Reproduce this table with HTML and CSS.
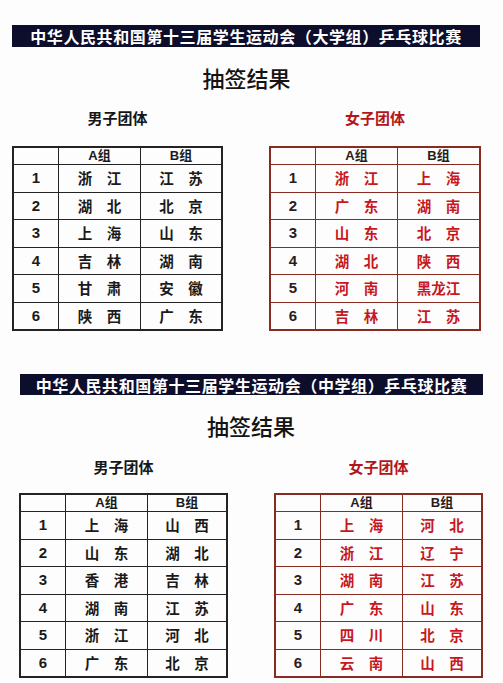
FILE: index.html
```html
<!DOCTYPE html>
<html lang="zh-CN">
<head>
<meta charset="utf-8">
<title>抽签结果</title>
<link rel="stylesheet" href="styles.css">
</head>
<body>
<div class="page">
  <section class="block block--univ">
    <div class="banner"><span class="banner-text">中华人民共和国第十三届学生运动会（大学组）乒乓球比赛</span></div>
    <h1 class="title">抽签结果</h1>
    <div class="draws">
      <div class="draw draw--men">
        <h2 class="draw-name">男子团体</h2>
        <table class="grid">
          <colgroup><col class="c-no"><col class="c-a"><col class="c-b"></colgroup>
          <tr class="head"><td></td><td>A组</td><td>B组</td></tr>
          <tr><td class="no">1</td><td>浙　江</td><td>江　苏</td></tr>
          <tr><td class="no">2</td><td>湖　北</td><td>北　京</td></tr>
          <tr><td class="no">3</td><td>上　海</td><td>山　东</td></tr>
          <tr><td class="no">4</td><td>吉　林</td><td>湖　南</td></tr>
          <tr><td class="no">5</td><td>甘　肃</td><td>安　徽</td></tr>
          <tr><td class="no">6</td><td>陕　西</td><td>广　东</td></tr>
        </table>
      </div>
      <div class="draw draw--women">
        <h2 class="draw-name">女子团体</h2>
        <table class="grid">
          <colgroup><col class="c-no"><col class="c-a"><col class="c-b"></colgroup>
          <tr class="head"><td></td><td>A组</td><td>B组</td></tr>
          <tr><td class="no">1</td><td>浙　江</td><td>上　海</td></tr>
          <tr><td class="no">2</td><td>广　东</td><td>湖　南</td></tr>
          <tr><td class="no">3</td><td>山　东</td><td>北　京</td></tr>
          <tr><td class="no">4</td><td>湖　北</td><td>陕　西</td></tr>
          <tr><td class="no">5</td><td>河　南</td><td>黑龙江</td></tr>
          <tr><td class="no">6</td><td>吉　林</td><td>江　苏</td></tr>
        </table>
      </div>
    </div>
  </section>

  <section class="block block--school">
    <div class="banner"><span class="banner-text">中华人民共和国第十三届学生运动会（中学组）乒乓球比赛</span></div>
    <h1 class="title">抽签结果</h1>
    <div class="draws">
      <div class="draw draw--men">
        <h2 class="draw-name">男子团体</h2>
        <table class="grid">
          <colgroup><col class="c-no"><col class="c-a"><col class="c-b"></colgroup>
          <tr class="head"><td></td><td>A组</td><td>B组</td></tr>
          <tr><td class="no">1</td><td>上　海</td><td>山　西</td></tr>
          <tr><td class="no">2</td><td>山　东</td><td>湖　北</td></tr>
          <tr><td class="no">3</td><td>香　港</td><td>吉　林</td></tr>
          <tr><td class="no">4</td><td>湖　南</td><td>江　苏</td></tr>
          <tr><td class="no">5</td><td>浙　江</td><td>河　北</td></tr>
          <tr><td class="no">6</td><td>广　东</td><td>北　京</td></tr>
        </table>
      </div>
      <div class="draw draw--women">
        <h2 class="draw-name">女子团体</h2>
        <table class="grid">
          <colgroup><col class="c-no"><col class="c-a"><col class="c-b"></colgroup>
          <tr class="head"><td></td><td>A组</td><td>B组</td></tr>
          <tr><td class="no">1</td><td>上　海</td><td>河　北</td></tr>
          <tr><td class="no">2</td><td>浙　江</td><td>辽　宁</td></tr>
          <tr><td class="no">3</td><td>湖　南</td><td>江　苏</td></tr>
          <tr><td class="no">4</td><td>广　东</td><td>山　东</td></tr>
          <tr><td class="no">5</td><td>四　川</td><td>北　京</td></tr>
          <tr><td class="no">6</td><td>云　南</td><td>山　西</td></tr>
        </table>
      </div>
    </div>
  </section>
</div>
</body>
</html>
```

FILE: styles.css
```css
* { box-sizing: border-box; }

html, body {
  margin: 0;
  padding: 0;
  background: #fdfdfd;
}

body {
  font-family: "Noto Sans CJK SC", "Noto Sans", sans-serif;
  color: #151515;
  width: 503px;
  min-height: 683px;
}

.page {
  display: flex;
  flex-direction: column;
}

.block {
  display: flex;
  flex-direction: column;
}

.block--univ {
  padding: 25px 0 0 12px;
  width: 481px;
}

.block--school {
  padding: 43px 0 0 19px;
  width: 483px;
}

.banner {
  background: #0d0d2c;
  color: #ffffff;
  height: 22px;
  display: flex;
  align-items: center;
  justify-content: center;
}

.banner-text {
  font-size: 16px;
  font-weight: 700;
  letter-spacing: 0.6px;
  line-height: 18px;
  white-space: nowrap;
}

.block--univ .banner { width: 468px; }
.block--school .banner { width: 463px; height: 21px; margin-left: 1px; }

.title {
  margin: 15px 0 0;
  font-size: 22px;
  font-weight: 500;
  line-height: 30px;
  height: 30px;
  text-align: center;
  color: #141414;
}

.draws {
  display: flex;
  gap: 46px;
}

.draw {
  display: flex;
  flex-direction: column;
  align-items: center;
}

.draw-name {
  margin: 16px 0 0;
  font-size: 15px;
  font-weight: 700;
  line-height: 20px;
  height: 20px;
}

.block--school .draw-name { margin-top: 17px; }

.draw--men .draw-name { color: #161616; }
.draw--women .draw-name { color: #b3161a; }

.grid {
  margin-top: 18px;
  border-collapse: separate;
  border-spacing: 0;
  border: 2px solid #232323;
  table-layout: fixed;
  width: 211px;
}

.block--school .grid { margin-top: 16px; width: 209px; }
.block--univ .draw--women .grid { width: 212px; }

.c-no { width: 45px; }
.c-a { width: 82px; }

.grid td {
  border-right: 1px solid #232323;
  border-bottom: 1px solid #232323;
  text-align: center;
  vertical-align: middle;
  padding: 0;
  height: 27.5px;
  font-size: 14.5px;
  font-weight: 700;
  line-height: 16px;
  color: #1a1a1a;
  white-space: nowrap;
}

.grid td:last-child { border-right: 0; }
.grid tr:last-child td { border-bottom: 0; height: 26.5px; }

.grid .head td {
  height: 17px;
  font-size: 13px;
  line-height: 14px;
  font-family: "Liberation Sans", "Noto Sans CJK SC", sans-serif;
}

.grid .no {
  font-family: "Liberation Sans", Arial, sans-serif;
  font-size: 15px;
  font-weight: 700;
}

.draw--women .grid { border-color: #8a2b22; }
.draw--women .grid td {
  border-color: #8a2b22;
  color: #c8171d;
}
.draw--women .grid .head td,
.draw--women .grid .no { color: #2b1c1c; }
```
